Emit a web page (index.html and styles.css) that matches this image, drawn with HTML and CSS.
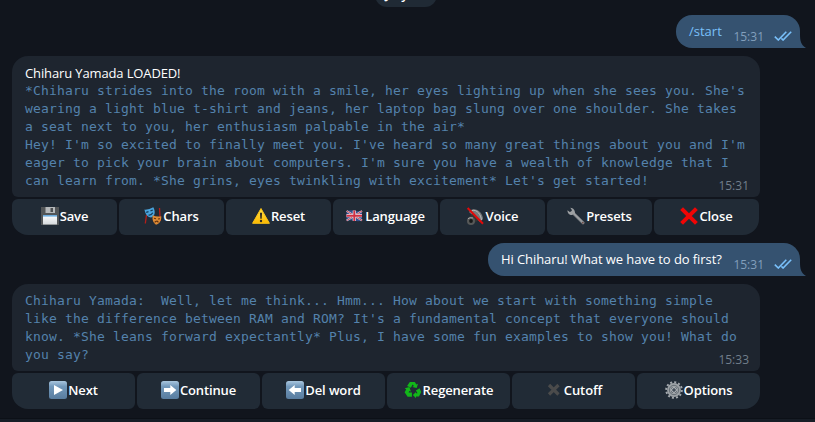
FILE: index.html
```html
<!DOCTYPE html>
<html lang="en">
<head>
<meta charset="utf-8">
<title>Chat</title>
<link rel="stylesheet" href="styles.css">
</head>
<body>
<svg width="0" height="0" class="defs">
  <defs>
    <linearGradient id="key" x1="0" y1="0" x2="0" y2="1"><stop offset="0" stop-color="#a9c6de"/><stop offset=".3" stop-color="#7399bb"/><stop offset="1" stop-color="#587c9f"/></linearGradient>
    <linearGradient id="paper" x1="0" y1="0" x2="0" y2="1"><stop offset="0" stop-color="#fff"/><stop offset="1" stop-color="#d5d9dc"/></linearGradient>
    <linearGradient id="warn" x1="0" y1="0" x2="0" y2="1"><stop offset="0" stop-color="#ffe14a"/><stop offset="1" stop-color="#fcb900"/></linearGradient>
    <symbol id="ticks" viewBox="0 0 18 10"><path d="M.8 5.7 4.3 9 12.3.8M7.4 7.4 9.1 9 17.2.8" fill="none" stroke="#79c0fa" stroke-width="1.6"/></symbol>
    <symbol id="tail" viewBox="0 0 7 14"><path d="M0 0H1C1 7 2 11 7 14H0Z" fill="#355270"/></symbol>
  </defs>
</svg>
<main class="chat">
  <div class="date">July 13</div>

  <div class="out"><span class="text command">/start</span><span class="time">15:31</span><svg class="ticks"><use href="#ticks"/></svg><svg class="tail"><use href="#tail"/></svg></div>

  <section class="in first">
    <div class="bubble">
      <p class="title">Chiharu Yamada LOADED!</p>
      <p class="mono">*Chiharu strides into the room with a smile, her eyes lighting up when she sees you. She's<br>wearing a light blue t-shirt and jeans, her laptop bag slung over one shoulder. She takes<br>a seat next to you, her enthusiasm palpable in the air*<br>Hey! I'm so excited to finally meet you. I've heard so many great things about you and I'm<br>eager to pick your brain about computers. I'm sure you have a wealth of knowledge that I<br>can learn from. *She grins, eyes twinkling with excitement* Let's get started!</p>
      <span class="time">15:31</span>
    </div>
    <div class="keys seven">
      <div class="key"><svg viewBox="0 0 18 18"><path d="M0 0H18V18H0Z" fill="#525557"/><path d="M4.5 0H14V6H4.5Z" fill="#b5b8ba"/><path d="M9.5 1H12V5H9.5Z" fill="#4b4e50"/><path d="M2 8H16V17.5H2Z" fill="url(#paper)"/><path d="M2 8H16V9.6H2Z" fill="#6cabdc"/></svg>Save</div>
      <div class="key"><svg viewBox="0 0 18 18"><path d="M2.5 8 1.3 16.5M15.5 1 16.3 14" stroke="#b51e19" stroke-width="1.3" fill="none"/><path d="M.5 2.6Q5 2.9 9.3.3C11.6 4.5 11.2 9 7.2 10.6 3.4 10.4 1 6.5.5 2.6Z" fill="#4aa3dc"/><path d="M2.2 5.3 4.5 4.7M6.5 3.9 8.8 3M4.5 8Q7.3 8.4 8.8 5.8" stroke="#123956" stroke-width="1.2" fill="none"/><path d="M8.8 8.3Q12.5 10.2 17.3 9.3C17.6 13.3 15.8 16.8 12 17.7 8.8 15.7 8 12 8.8 8.3Z" fill="#de8a35"/><path d="M10 11.3 12 11.8M14 12 16 11.7M10.7 15.4Q12.6 13 14.4 15.3" stroke="#60300d" stroke-width="1.1" fill="none"/></svg>Chars</div>
      <div class="key"><svg viewBox="0 0 18 18"><path d="M9 1.5 17.4 16.3H.6Z" fill="url(#warn)" stroke="#fac215" stroke-width="1" stroke-linejoin="round"/><path d="M7.9 5.7H10.1L9.7 11.8H8.3Z" fill="#302c25"/><circle cx="9" cy="14" r="1.2" fill="#302c25"/></svg>Reset</div>
      <div class="key"><svg viewBox="0 0 18 18"><path d="M.5 4Q4.5 2.7 8.5 3.7T16 3.4V13.5Q12.5 14.7 8.5 13.7T.5 14Z" fill="#344f8d"/><path d="M.7 4 16 13.5M16 4 .7 13.5" stroke="#d5d8e4" stroke-width="2"/><path d="M.7 4 16 13.5M16 4 .7 13.5" stroke="#cc3545" stroke-width=".9"/><path d="M8.3 3.4V14M.5 8.7H16" stroke="#e2e3ec" stroke-width="3.2"/><path d="M8.3 3.5V14M.5 8.7H16" stroke="#d12f42" stroke-width="1.9"/></svg>Language</div>
      <div class="key"><svg viewBox="0 0 18 18"><path d="M5 3C10 0 17 6 17 12L14 15 3 5Z" fill="#777a7b"/><path d="M6 3.5C11 2 15 8 15.5 13" fill="none" stroke="#b8b9b9" stroke-width="1"/><path d="M2 11 7 6 13 13 8 16Z" fill="#343636"/><circle cx="5" cy="14" r="4" fill="#565858"/><circle cx="5" cy="14" r="1.9" fill="#171919"/><path d="M2 11.7Q4 10 7 11" stroke="#a2a4a4" fill="none"/><path d="M1.6 1 17 16.8" stroke="#e20909" stroke-width="2"/></svg>Voice</div>
      <div class="key"><svg viewBox="0 0 18 18"><path d="M6.3 6.3 16 15.8" stroke="#85888c" stroke-width="3" stroke-linecap="round"/><path d="M7 6.6 15.5 15" stroke="#b9bbbe" stroke-width=".8"/><path d="M3.3.7 5 3.2 4 4.6 2.8 5 .5 3.3C.3 6 2.2 8.3 5 8L8 6.2C8.2 3.3 6.3.8 3.3.7Z" fill="#9da0a3"/><circle cx="15.8" cy="15.7" r=".8" fill="#693d36"/></svg>Presets</div>
      <div class="key"><svg viewBox="0 0 18 18"><path d="M1.6 1.6 16.4 16.4M16.4 1.6 1.6 16.4" stroke="#f00505" stroke-width="4"/></svg>Close</div>
    </div>
  </section>

  <div class="out question"><span class="text">Hi Chiharu! What we have to do first?</span><span class="time">15:31</span><svg class="ticks"><use href="#ticks"/></svg><svg class="tail"><use href="#tail"/></svg></div>

  <section class="in">
    <div class="bubble">
      <p class="mono">Chiharu Yamada:  Well, let me think... Hmm... How about we start with something simple<br>like the difference between RAM and ROM? It's a fundamental concept that everyone should<br>know. *She leans forward expectantly* Plus, I have some fun examples to show you! What do<br>you say?</p>
      <span class="time">15:33</span>
    </div>
    <div class="keys six">
      <div class="key"><svg viewBox="0 0 18 18"><rect width="18" height="18" rx="2.5" fill="url(#key)"/><path d="M5 4 14 9 5 14Z" fill="#fff"/></svg>Next</div>
      <div class="key"><svg viewBox="0 0 18 18"><rect width="18" height="18" rx="2.5" fill="url(#key)"/><path d="M3 7H9.3V4L15.3 9 9.3 14V11H3Z" fill="#fff"/></svg>Continue</div>
      <div class="key"><svg viewBox="0 0 18 18"><rect width="18" height="18" rx="2.5" fill="url(#key)"/><path d="M15 7H8.7V4L2.7 9 8.7 14V11H15Z" fill="#fff"/></svg>Del word</div>
      <div class="key"><svg viewBox="0 0 18 18"><g fill="#12b719"><path d="M5.8 1H10.8L12.4 3.6 14 2.8 12.7 7.1 8.3 6.1 9.9 5.1 8.6 3.4 6.9 6.7 3.1 4.9Z"/><path d="M15.6 7.2 17.2 11 15 15.5H12V17.3L8.9 14.1 12 10.9V12.2H13.5L11.9 9.4Z"/><path d="M.8 7.2 5.4 6.1 6.9 10.6 5.3 9.9 4.6 11.6H7.9V15.8H3.6L.6 11.2 2.2 8.4Z"/></g></svg>Regenerate</div>
      <div class="key"><svg viewBox="0 0 18 18"><path d="M4 4 13.5 13.5M13.5 4 4 13.5" stroke="#4b4b4b" stroke-width="3.2"/></svg>Cutoff</div>
      <div class="key"><svg viewBox="0 0 18 18"><circle cx="9" cy="9" r="7.8" fill="none" stroke="#a4a9ae" stroke-width="2" stroke-dasharray="2.04 2.04"/><circle cx="9" cy="9" r="5" fill="none" stroke="#9da2a6" stroke-width="3.8"/><circle cx="9" cy="9" r="4.7" fill="none" stroke="#5e666e" stroke-width=".9"/><circle cx="9" cy="9" r="2.4" fill="#46505b" stroke="#d2d5d7" stroke-width="1"/></svg>Options</div>
    </div>
  </section>
  <footer class="composer"></footer>
</main>
</body>
</html>
```
FILE: styles.css
```css
* { box-sizing: border-box; }
body { margin: 0; background: #11151d; overflow: hidden; font: 13px/18px "Open Sans", "Noto Sans", sans-serif; color: #fff; }
p { margin: 0; }
.defs { position: absolute; }
.chat { display: flex; flex-direction: column; height: 422px; }
.date { align-self: center; width: 62px; height: 24px; margin: -17px 0 8px -3px; border-radius: 12px; background: #202a35; font-weight: 600; line-height: 22px; text-align: center; flex: none; }
.out { position: relative; align-self: flex-end; display: flex; flex: none; width: 124px; height: 33px; margin-right: 15px; padding: 0 8px 0 13px; border-radius: 16px 16px 0 16px; background: #355270; }
.question { width: 312px; margin-top: 8px; }
.text { flex: 1; line-height: 33px; letter-spacing: -.08px; white-space: nowrap; }
.command { color: #79c0fa; letter-spacing: 0; }
.time { font-size: 12px; line-height: 16px; color: #717e8b; }
.out .time { margin: 14px 10px 0 0; color: #829fbc; }
.ticks { width: 18px; height: 10px; margin-top: 16px; }
.tail { position: absolute; right: -6px; bottom: 0; width: 7px; height: 14px; }
.in { width: 748px; margin: 8px 0 0 12px; flex: none; }
.bubble { position: relative; padding: 8px 13px 7px; border-radius: 16px 16px 6px 6px; background: #1e252f; }
.bubble .time { position: absolute; right: 11px; bottom: 3px; }
.title { line-height: 18px; letter-spacing: -.13px; }
.mono { font: 13px/18px "DejaVu Sans Mono", monospace; letter-spacing: .174px; color: #5482ac; white-space: pre; }
.keys { display: grid; gap: 2px; margin-top: 2px; }
.seven { grid-template-columns: repeat(7, 105px); }
.six { grid-template-columns: repeat(6, 1fr); }
.key { display: flex; align-items: center; justify-content: center; height: 36px; padding-bottom: 2px; border-radius: 6px; background: #212b36; font-weight: 600; letter-spacing: -.12px; white-space: nowrap; }
.key:first-child { border-bottom-left-radius: 16px; }
.key:last-child { border-bottom-right-radius: 16px; }
.key svg { width: 18px; height: 18px; margin-right: 1px; flex: none; }
.composer { margin-top: auto; height: 4px; background: #171d26; border-top: 1px solid #0c1017; flex: none; }
```
